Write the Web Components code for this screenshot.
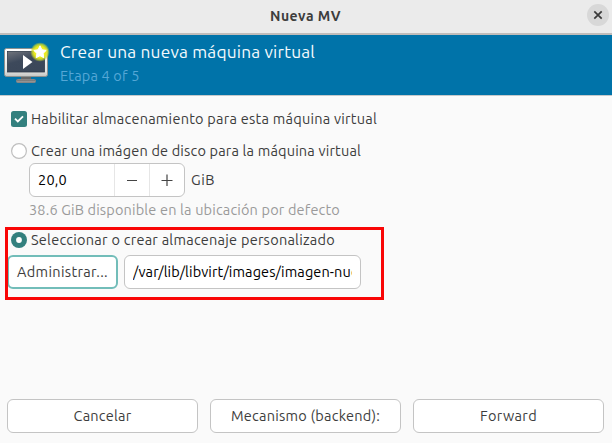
<!DOCTYPE html>
<html lang="es">
<head>
<meta charset="utf-8">
<title>Nueva MV</title>
<style>
html,body{margin:0;height:100%;overflow:hidden;background:#fafafa}
body{font-family:Ubuntu,"Noto Sans","Open Sans",sans-serif;font-size:14.500px;color:#3d3d3d}
</style>
</head>
<body>
<vm-wizard></vm-wizard>
<script>
const define = (name, html, setup) => customElements.define(name, class extends HTMLElement {
  connectedCallback() {
    if (this.shadowRoot) return;
    const t = document.createElement('template');
    t.innerHTML = html;
    this.attachShadow({mode: 'open'}).append(t.content.cloneNode(true));
    if (setup) setup(this, this.shadowRoot);
  }
});

/* A label whose tracking is adjusted to fill the given advance width. */
define('fit-label', `<style>:host{display:inline-block;white-space:pre;line-height:20px}span{display:inline-block}</style><span></span>`, (el, root) => {
  const s = root.querySelector('span');
  s.textContent = el.getAttribute('text');
  const w = +el.getAttribute('width');
  const n = s.textContent.length;
  if (w) {
    s.style.letterSpacing = (w - s.getBoundingClientRect().width) / n + 'px';
  }
});

define('window-title', `<style>
:host{display:grid;grid-template-columns:1fr auto 1fr;align-items:center;height:33px;background:#ebebeb;border-bottom:2px solid #bfbcba;box-sizing:content-box;font-weight:700;font-size:14px;color:#3d3d3d}
fit-label{grid-column:2;margin:0 1px 2px 0}
button{justify-self:end;margin:0 3px 3px 0;width:22px;height:22px;padding:0;border:0;border-radius:50%;background:#d8d8d8;display:grid;place-items:center}
</style><fit-label text="Nueva MV" width="71"></fit-label>
<button aria-label="Cerrar"><svg width="22" height="22" viewBox="0 0 22 22"><path d="M7.3 7.3l7.4 7.4M14.7 7.3l-7.4 7.4" stroke="#3a3a3a" stroke-width="1.7"/></svg></button>`);

define('vm-icon', `<style>:host{display:block;width:48px;height:48px}</style>
<svg width="48" height="48" viewBox="0 0 48 48">
<defs><linearGradient id="f" x1="0" y1="0" x2="0" y2="1"><stop offset="0" stop-color="#fff"/><stop offset=".8" stop-color="#e4e4e2"/><stop offset="1" stop-color="#c4c4c2"/></linearGradient>
<linearGradient id="s" x1="0" y1="0" x2=".5" y2="1"><stop offset="0" stop-color="#70747c"/><stop offset=".5" stop-color="#3d495b"/><stop offset="1" stop-color="#3b4759"/></linearGradient>
<linearGradient id="b" x1="0" y1="0" x2="0" y2="1"><stop offset="0" stop-color="#666"/><stop offset="1" stop-color="#aaa"/></linearGradient>
<radialGradient id="g"><stop offset="0" stop-color="#fff94f"/><stop offset=".6" stop-color="#e8ea1c"/><stop offset=".8" stop-color="#cfdc28" stop-opacity=".75"/><stop offset="1" stop-color="#b8ce32" stop-opacity="0"/></radialGradient></defs>
<path d="M17 34h10v4H17z" fill="#666"/>
<rect x="12.5" y="37.5" width="19" height="3" rx="1" fill="url(#b)" stroke="#858585"/>
<rect x=".5" y="6.500" width="43" height="28" rx="2" fill="url(#f)" stroke="#8d9190"/>
<rect x="3.500" y="9.500" width="37" height="20.500" fill="url(#s)" stroke="#303b49" stroke-width=".8"/>
<path d="M19 13v14l9.500-7z" fill="#fff"/>
<circle cx="36" cy="10" r="9.800" fill="url(#g)"/>
<path d="M36 3.800l1.900 4 4.300.6-3.100 3 .7 4.300-3.800-2-3.800 2 .7-4.300-3.100-3 4.300-.6z" fill="#fff" stroke="#fff" stroke-width="1"/>
</svg>`);

define('wizard-header', `<style>
:host{display:flex;height:60px;background:#0073a9;border-bottom:1px solid #c5c9cb;box-sizing:content-box;padding-left:4px}
vm-icon{margin-top:7px}
div{display:flex;flex-direction:column;margin:5px 0 0 8px}
.t{font-size:17.300px;line-height:24px;color:#f4fafd}
.s{color:#55a7d6;line-height:20px;margin-top:2px}
</style><vm-icon></vm-icon><div><fit-label class="t" text="Crear una nueva máquina virtual" width="255"></fit-label><fit-label class="s" text="Etapa 4 of 5" width="79.500"></fit-label></div>`);

define('toggle-row', `<style>
:host{display:flex;align-items:center;gap:4px;height:20px}
svg{flex:none}
</style><svg width="16" height="16" viewBox="0 0 16 16"></svg><slot></slot>`, (el, root) => {
  root.querySelector('svg').innerHTML = {
    check: '<rect width="16" height="16" rx="2.500" fill="#33807e"/><path d="M4 7.700l2.800 2.800L12 5.300" fill="none" stroke="#fff" stroke-width="1.800"/>',
    off: '<circle cx="8" cy="8" r="7.400" fill="#fff" stroke="#bfbfbf" stroke-width="1.200"/>',
    on: '<circle cx="8" cy="8" r="8" fill="#33807e"/><circle cx="8" cy="8" r="2.900" fill="#fff"/>'
  }[el.getAttribute('kind')];
});

define('spin-field', `<style>
:host{display:grid;grid-template-columns:84px 35px 35px;width:154px;height:32px;border:1px solid #c4c4c4;border-radius:6px;background:#fff;overflow:hidden}
div{display:flex;align-items:center;justify-content:center}
div+div{border-left:1px solid #e6e6e6}
.v{justify-content:flex-start;padding-left:8px;color:#000}
</style><div class="v"><fit-label text="20,0" width="29"></fit-label></div>
<div><svg width="12" height="12"><path d="M1 6.500h10" stroke="#444" stroke-width="1.200"/></svg></div>
<div><svg width="12" height="12"><path d="M.5 6.500h11M6 .5v12" stroke="#444" stroke-width="1.200"/></svg></div>`);

define('push-button', `<style>
:host{display:flex;align-items:center;justify-content:center;box-sizing:border-box;height:34px;border:1px solid #c4c4c4;border-radius:6px;background:#fff}
:host([focused]){border:2px solid #72bdb9;}
</style><slot></slot>`);

define('path-entry', `<style>
:host{display:flex;align-items:center;box-sizing:border-box;width:237px;height:34px;border:1px solid #c4c4c4;border-radius:6px;background:#fff;padding:0 8px;color:#000}
div{overflow:hidden;flex:1;height:20px}
</style><div><fit-label text="/var/lib/libvirt/images/imagen-nue" width="226"></fit-label></div>`);

define('vm-wizard', `<style>
:host{display:flex;flex-direction:column;width:612px;height:443px;background:#fafafa}
main{flex:1;padding:13px 11px 0;display:flex;flex-direction:column}
.create{margin-top:12px}
.size{display:flex;align-items:center;gap:6px;margin:2px 0 0 18px}
.hint{color:#9a9a9a;margin:3px 0 0 18px}
.custom{position:relative;margin:10px 0 0 -4px;width:354px}
.custom toggle-row{margin-left:4px}
.row{display:flex;gap:6px;margin-top:5px}
.row push-button{width:111px}
.mark{position:absolute;left:-2px;top:-3px;width:373px;height:67px;border:3px solid #f90606}
footer{display:grid;grid-template-columns:repeat(3,191px);gap:12px;padding:0 0 10px 7px}
</style>
<window-title></window-title>
<wizard-header></wizard-header>
<main>
<toggle-row kind="check"><fit-label text="Habilitar almacenamiento para esta máquina virtual" width="346"></fit-label></toggle-row>
<toggle-row class="create" kind="off"><fit-label text="Crear una imágen de disco para la máquina virtual" width="330"></fit-label></toggle-row>
<div class="size"><spin-field></spin-field><fit-label text="GiB" width="24"></fit-label></div>
<fit-label class="hint" text="38.6 GiB disponible en la ubicación por defecto" width="311"></fit-label>
<section class="custom">
<toggle-row kind="on"><fit-label text="Seleccionar o crear almacenaje personalizado" width="304"></fit-label></toggle-row>
<div class="row"><push-button focused><fit-label text="Administrar..." width="91"></fit-label></push-button><path-entry></path-entry></div>
<div class="mark"></div>
</section>
</main>
<footer>
<push-button><fit-label text="Cancelar" width="58"></fit-label></push-button>
<push-button><fit-label text="Mecanismo (backend):" width="149"></fit-label></push-button>
<push-button><fit-label text="Forward" width="57"></fit-label></push-button>
</footer>`);
</script>
</body>
</html>
